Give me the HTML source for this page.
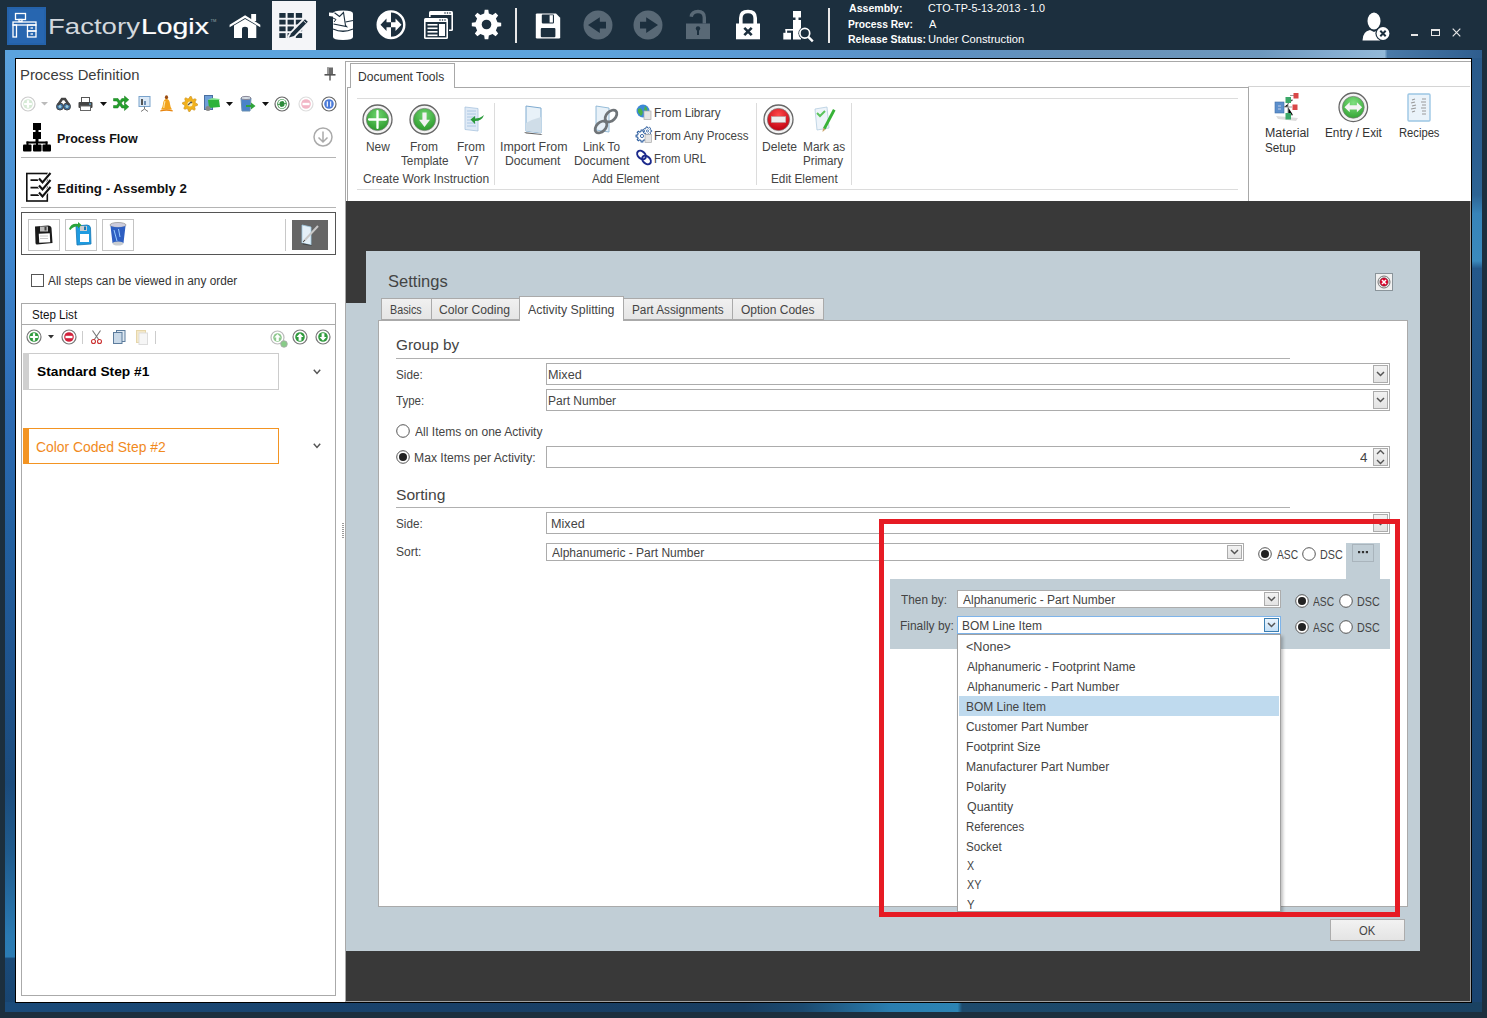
<!DOCTYPE html>
<html><head><meta charset="utf-8"><title>FactoryLogix</title>
<style>
html,body{margin:0;padding:0;}
body{width:1487px;height:1018px;position:relative;overflow:hidden;background:#1c2f3e;font-family:"Liberation Sans", sans-serif;}
svg{overflow:visible;}
</style></head><body>
<div style="position:absolute;left:7px;top:7px;width:39px;height:38px;background:#2462aa;"></div>
<div style="position:absolute;left:9px;top:9px;width:35px;height:34px;background:#2766b0;"></div>
<svg style="position:absolute;left:7px;top:7px;" width="39" height="38" viewBox="0 0 39 38"><g fill="none" stroke="#fff" stroke-width="1.3"><rect x="8.5" y="6.5" width="10" height="6"/><rect x="12" y="12.5" width="3" height="2"/><rect x="6" y="15" width="23" height="3"/><rect x="6" y="18" width="3.5" height="12"/><rect x="20.5" y="18" width="8.5" height="6"/><rect x="20.5" y="24" width="8.5" height="6"/><line x1="23.5" y1="21" x2="26" y2="21"/><line x1="23.5" y1="27" x2="26" y2="27"/></g></svg>
<div style="position:absolute;left:47.79px;top:16.08px;font-size:22px;line-height:22px;font-weight:400;color:#d2d8dd;white-space:nowrap;transform:scaleX(1.2531);transform-origin:0 0;">Factory</div>
<div style="position:absolute;left:141.43px;top:16.08px;font-size:22px;line-height:22px;font-weight:400;color:#ffffff;white-space:nowrap;transform:scaleX(1.2905);transform-origin:0 0;-webkit-text-stroke:0.2px #fff;">Logix</div>
<div style="position:absolute;left:210.50px;top:18.61px;font-size:4px;line-height:4px;font-weight:400;color:#9aa;white-space:nowrap;">TM</div>
<div style="position:absolute;left:272px;top:1px;width:44px;height:49px;background:#f4f5f8;"></div>
<svg style="position:absolute;left:225px;top:5px;" width="40" height="40" viewBox="0 0 40 40"><path d="M4.6 19.8 L20.1 10.2 L35.3 19.8 L35.3 22.2 L20.1 13 L4.6 22.2 Z" fill="#fff"/><rect x="26.2" y="9" width="4.9" height="7" fill="#fff"/><path d="M9 20.5 L20.1 14 L31.3 20.5 L31.3 33 L23 33 L23 24 Q23 21.7 20 21.7 Q17 21.7 17 24 L17 33 L9 33 Z" fill="#fff"/></svg>
<svg style="position:absolute;left:225px;top:5px;" width="95" height="40" viewBox="0 0 95 40"><rect x="54.30" y="8.00" width="6.3" height="4.8" fill="#1c2f3e"/><rect x="62.55" y="8.00" width="6.3" height="4.8" fill="#1c2f3e"/><rect x="70.80" y="8.00" width="6.3" height="4.8" fill="#1c2f3e"/><rect x="54.30" y="14.72" width="6.3" height="4.8" fill="#1c2f3e"/><rect x="62.55" y="14.72" width="6.3" height="4.8" fill="#1c2f3e"/><rect x="70.80" y="14.72" width="6.3" height="4.8" fill="#1c2f3e"/><rect x="54.30" y="21.44" width="6.3" height="4.8" fill="#1c2f3e"/><rect x="62.55" y="21.44" width="6.3" height="4.8" fill="#1c2f3e"/><rect x="70.80" y="21.44" width="6.3" height="4.8" fill="#1c2f3e"/><rect x="54.30" y="28.16" width="6.3" height="4.8" fill="#1c2f3e"/><rect x="62.55" y="28.16" width="6.3" height="4.8" fill="#1c2f3e"/><rect x="70.80" y="28.16" width="6.3" height="4.8" fill="#1c2f3e"/><path d="M63.5 32 L66 28 L80 13.5 L83.5 16.5 L69.5 31 L65 33.5 Z" fill="#f4f5f8" stroke="#f4f5f8" stroke-width="2.6" stroke-linejoin="round"/><path d="M64 32.5 L66.2 28.3 L80 14.2 L82.8 16.8 L69 31 Z" fill="#1c2f3e"/><path d="M78.5 15.8 L81.3 18.4" stroke="#f4f5f8" stroke-width="0.9"/></svg>
<svg style="position:absolute;left:320px;top:5px;" width="40" height="40" viewBox="0 0 40 40"><path d="M13 8.5 Q13 5.5 23 5.5 Q33 5.5 33 8.5 L33 32 Q33 35 23 35 Q13 35 13 32 Z" fill="#fff"/><path d="M13 24 Q23 28.5 33 24" stroke="#1c2f3e" stroke-width="1.3" fill="none"/><path d="M9 7.5 L15.5 8 L15.5 12 L9 11 Z" fill="#fff"/><path d="M14.5 7.8 L19.5 11.5 L23.5 7.5 L25.5 20.5 L26.5 21.5 L13.5 19" stroke="#1c2f3e" stroke-width="1.1" fill="none"/><path d="M25.5 17 L33 15.5" stroke="#1c2f3e" stroke-width="1.1" fill="none"/><path d="M13 13 L16 14.5 L14 17" stroke="#1c2f3e" stroke-width="1" fill="none"/></svg>
<svg style="position:absolute;left:376px;top:10px;" width="30" height="30" viewBox="0 0 30 30"><circle cx="15" cy="14.7" r="13.3" fill="none" stroke="#fff" stroke-width="2.4"/><path d="M15 1.5 A13.2 13.2 0 0 0 15 28 Z" fill="#fff"/><path d="M4.5 14.7 L10.5 8.5 L10.5 12.2 L15 12.2 L15 17.2 L10.5 17.2 L10.5 21 Z" fill="#1c2f3e"/><path d="M25.5 14.7 L19.5 8.5 L19.5 12.2 L15 12.2 L15 17.2 L19.5 17.2 L19.5 21 Z" fill="#fff"/></svg>
<svg style="position:absolute;left:423px;top:10px;" width="32" height="30" viewBox="0 0 32 30"><rect x="6" y="1" width="24" height="20" rx="1.5" fill="#fff"/><rect x="7.6" y="5" width="20.8" height="14.5" fill="#1c2f3e"/><rect x="0" y="7" width="26" height="23" rx="2" fill="#1c2f3e"/><rect x="1" y="8" width="24" height="21" rx="1.5" fill="#fff"/><rect x="2.6" y="12" width="20.8" height="15.4" fill="#1c2f3e"/><rect x="4.5" y="14" width="10" height="1.6" fill="#fff"/><rect x="4.5" y="17.5" width="10" height="1.6" fill="#fff"/><rect x="4.5" y="21" width="10" height="1.6" fill="#fff"/><rect x="4.5" y="24.5" width="10" height="1.6" fill="#fff"/><rect x="16" y="14" width="6" height="12" fill="#fff"/><circle cx="17" cy="10" r="0.8" fill="#1c2f3e"/><circle cx="19.5" cy="10" r="0.8" fill="#1c2f3e"/><circle cx="22" cy="10" r="0.8" fill="#1c2f3e"/><circle cx="22" cy="3" r="0.8" fill="#1c2f3e"/><circle cx="24.5" cy="3" r="0.8" fill="#1c2f3e"/><circle cx="27" cy="3" r="0.8" fill="#1c2f3e"/></svg>
<svg style="position:absolute;left:472px;top:10px;" width="29" height="30" viewBox="0 0 29 30"><polygon points="12.17,3.54 12.70,-0.19 16.30,-0.19 16.83,3.54 20.60,5.11 23.61,2.84 26.16,5.39 23.89,8.40 25.46,12.17 29.19,12.70 29.19,16.30 25.46,16.83 23.89,20.60 26.16,23.61 23.61,26.16 20.60,23.89 16.83,25.46 16.30,29.19 12.70,29.19 12.17,25.46 8.40,23.89 5.39,26.16 2.84,23.61 5.11,20.60 3.54,16.83 -0.19,16.30 -0.19,12.70 3.54,12.17 5.11,8.40 2.84,5.39 5.39,2.84 8.40,5.11" fill="#fff"/><circle cx="14.5" cy="14.5" r="4.8" fill="#1c2f3e"/></svg>
<div style="position:absolute;left:515px;top:8px;width:1.5px;height:35px;background:#e8e8e8;"></div>
<div style="position:absolute;left:828px;top:8px;width:1.5px;height:35px;background:#e8e8e8;"></div>
<svg style="position:absolute;left:535px;top:12.5px;" width="26" height="26" viewBox="0 0 26 26"><path d="M0.8 1.5 Q0.8 0.5 2 0.5 L21 0.5 L25.2 4.7 L25.2 24.2 Q25.2 25.5 24 25.5 L2 25.5 Q0.8 25.5 0.8 24.2 Z" fill="#fff"/><rect x="6.8" y="1.6" width="12.2" height="8.8" rx="0.8" fill="#1c2f3e"/><rect x="14.6" y="2.2" width="3.3" height="7.3" fill="#fff"/><rect x="5.8" y="15" width="14.6" height="9.3" rx="1" fill="#1c2f3e"/></svg>
<svg style="position:absolute;left:583px;top:10px;" width="30" height="30" viewBox="0 0 30 30"><circle cx="15" cy="15" r="14.5" fill="#596976"/><path d="M5 15 L16.8 7.3 L16.8 11.8 L23 11.8 L23 18.4 L16.8 18.4 L16.8 23 Z" fill="#1c2f3e"/></svg>
<svg style="position:absolute;left:633px;top:10px;" width="30" height="30" viewBox="0 0 30 30"><circle cx="15" cy="15" r="14.5" fill="#596976"/><path d="M25 15 L13.2 7.3 L13.2 11.8 L7 11.8 L7 18.4 L13.2 18.4 L13.2 23 Z" fill="#1c2f3e"/></svg>
<svg style="position:absolute;left:675px;top:5px;" width="145" height="40" viewBox="0 0 145 40"><path d="M29.3 18.5 L29.3 12.5 Q29.3 6.5 23 6.5 Q17 6.5 16.2 11.8" fill="none" stroke="#596976" stroke-width="3.4"/><rect x="11" y="18.5" width="24" height="15.6" fill="#596976"/><circle cx="23" cy="23.5" r="2.2" fill="#1c2f3e"/><rect x="22" y="24" width="2" height="6" fill="#1c2f3e"/><path d="M65.8 19 L65.8 13 Q65.8 6.5 73 6.5 Q80.2 6.5 80.2 13 L80.2 19" fill="none" stroke="#fff" stroke-width="3.6"/><rect x="61" y="18.5" width="24" height="15.8" fill="#fff"/><path d="M69.3 22.8 L76.7 30.2 M76.7 22.8 L69.3 30.2" stroke="#1c2f3e" stroke-width="2.6"/><rect x="118" y="6" width="8" height="6.5" fill="#fff"/><rect x="120.5" y="12" width="3" height="3" fill="#fff"/><rect x="118" y="15" width="8" height="19.5" fill="#fff"/><rect x="108.3" y="27.8" width="7.7" height="6.7" fill="#fff"/><rect x="110.5" y="24" width="10" height="1.6" fill="#fff"/><rect x="110.5" y="24" width="1.6" height="4" fill="#fff"/><circle cx="129.8" cy="28.3" r="6.4" fill="#1c2f3e"/><circle cx="129.8" cy="28.3" r="4.9" fill="#1c2f3e" stroke="#fff" stroke-width="1.7"/><path d="M133.3 31.8 L137.8 36.3" stroke="#fff" stroke-width="2.4"/></svg>
<div style="position:absolute;left:848.79px;top:3.29px;font-size:11px;line-height:11px;font-weight:700;color:#fff;white-space:nowrap;transform:scaleX(0.9606);transform-origin:0 0;">Assembly:</div>
<div style="position:absolute;left:928.46px;top:3.29px;font-size:11px;line-height:11px;font-weight:400;color:#fff;white-space:nowrap;transform:scaleX(0.9782);transform-origin:0 0;">CTO-TP-5-13-2013 - 1.0</div>
<div style="position:absolute;left:848.39px;top:18.79px;font-size:11px;line-height:11px;font-weight:700;color:#fff;white-space:nowrap;transform:scaleX(0.9312);transform-origin:0 0;">Process Rev:</div>
<div style="position:absolute;left:929.00px;top:18.79px;font-size:11px;line-height:11px;font-weight:400;color:#fff;white-space:nowrap;transform:scaleX(1.0041);transform-origin:0 0;">A</div>
<div style="position:absolute;left:848.37px;top:34.29px;font-size:11px;line-height:11px;font-weight:700;color:#fff;white-space:nowrap;transform:scaleX(0.9515);transform-origin:0 0;">Release Status:</div>
<div style="position:absolute;left:928.22px;top:34.29px;font-size:11px;line-height:11px;font-weight:400;color:#fff;white-space:nowrap;transform:scaleX(1.0142);transform-origin:0 0;">Under Construction</div>
<svg style="position:absolute;left:1362px;top:12px;" width="29" height="30" viewBox="0 0 29 30"><ellipse cx="12" cy="9" rx="6.5" ry="8.6" fill="#fff"/><path d="M0.5 28.5 Q0.5 19.5 8 18 L12 20 L16 18 Q20 19 22 22 L18 28.5 Z" fill="#fff"/><circle cx="21" cy="21.5" r="7.6" fill="#1c2f3e"/><circle cx="21" cy="21.5" r="6.4" fill="#fff"/><path d="M18.3 18.8 L23.7 24.2 M23.7 18.8 L18.3 24.2" stroke="#1c2f3e" stroke-width="2"/></svg>
<div style="position:absolute;left:1411px;top:34px;width:7px;height:2px;background:#e6e6e6;"></div>
<div style="position:absolute;left:1431px;top:29px;width:9px;height:7px;border:1.2px solid #e6e6e6;border-top-width:2px;box-sizing:border-box;"></div>
<svg style="position:absolute;left:1452px;top:28px;" width="9" height="9" viewBox="0 0 9 9"><path d="M0.7 0.7 L8.3 8.3 M8.3 0.7 L0.7 8.3" stroke="#e6e6e6" stroke-width="1.2"/></svg>
<div style="position:absolute;left:5px;top:50px;width:1477px;height:962px;background:linear-gradient(90deg,#5ba3de 0%,#5ea3dc 40%,#5a98d2 52%,#5b90c4 62%,#6892b8 74%,#6d98be 85%,#84acd0 90%,#93b9d8 93.4%,#4a7aa8 93.6%,#2e5d8e 100%);"></div>
<div style="position:absolute;left:5px;top:58px;width:10px;height:954px;background:linear-gradient(180deg,#5ba2de 0%,#4088cf 20%,#2d6cb5 36%,#2260a0 50%,#1f5590 62%,#1b4b7c 76%,#1f5a8c 83%,#2a7ab2 92%,#2b7cb4 94.2%,#1a4a78 94.4%,#184470 100%);"></div>
<div style="position:absolute;left:5px;top:1002px;width:1477px;height:10px;background:linear-gradient(90deg,#1a4b7a 0%,#194068 30%,#183d60 50%,#1b4a70 54%,#2a7eb0 60%,#2c84b4 64.5%,#1d4a6c 64.8%,#1a4262 100%);"></div>
<div style="position:absolute;left:1472px;top:58px;width:10px;height:944px;background:linear-gradient(180deg,#2a5a8a 0%,#2b5e90 10%,#2d6494 14.5%,#3784b9 16.5%,#3a8abd 21.5%,#24588a 22.3%,#1f5080 40%,#1c4a78 70%,#1a4470 100%);"></div>
<div style="position:absolute;left:15px;top:58px;width:1457px;height:945px;background:#000;"></div>
<div style="position:absolute;left:16px;top:59px;width:1455px;height:943px;background:#fff;"></div>
<div style="position:absolute;left:19.81px;top:67.63px;font-size:14.5px;line-height:14.5px;font-weight:400;color:#3c3c3c;white-space:nowrap;transform:scaleX(1.0218);transform-origin:0 0;">Process Definition</div>
<svg style="position:absolute;left:324px;top:67px;" width="12" height="14" viewBox="0 0 12 14"><rect x="3" y="0.5" width="6" height="7" fill="#6b6b6b"/><rect x="3" y="0.5" width="2" height="7" fill="#9a9a9a"/><rect x="0.5" y="7" width="11" height="1.6" fill="#555"/><rect x="5.3" y="8" width="1.4" height="5.5" fill="#555"/></svg>
<svg style="position:absolute;left:20px;top:96px;" width="16" height="16" viewBox="0 0 16 16"><circle cx="8" cy="8" r="7" fill="#fff" stroke="#ccc" stroke-width="1.2"/><circle cx="8" cy="8" r="4.8" fill="#d6ead6"/><path d="M4.1499999999999995 8 H11.850000000000001 M8 4.1499999999999995 V11.850000000000001" stroke="#fff" stroke-width="2.24"/></svg>
<svg style="position:absolute;left:41.0px;top:102.25px;" width="7" height="3.5" viewBox="0 0 7 3.5"><path d="M0 0 H7 L3.5 3.5 Z" fill="#bbb"/></svg>
<svg style="position:absolute;left:56px;top:97px;" width="15" height="14" viewBox="0 0 15 14"><circle cx="4" cy="9.5" r="3.5" fill="#3d6d9c" stroke="#444" stroke-width="1"/><circle cx="11" cy="9.5" r="3.5" fill="#3d6d9c" stroke="#444" stroke-width="1"/><path d="M2 8 L6 2 L9 2 L13 8" stroke="#444" stroke-width="2.5" fill="none"/><circle cx="4" cy="9.5" r="1.5" fill="#9cd"/><circle cx="11" cy="9.5" r="1.5" fill="#9cd"/></svg>
<svg style="position:absolute;left:78px;top:97px;" width="15" height="14" viewBox="0 0 15 14"><rect x="3.5" y="0.5" width="8" height="5" fill="#fff" stroke="#555"/><rect x="0.5" y="5" width="14" height="6" rx="1" fill="#444"/><rect x="2.5" y="9" width="10" height="4.5" fill="#fff" stroke="#666"/><rect x="11" y="6.5" width="2" height="1" fill="#6cf"/></svg>
<svg style="position:absolute;left:99.5px;top:102.0px;" width="7" height="4" viewBox="0 0 7 4"><path d="M0 0 H7 L3.5 4 Z" fill="#111"/></svg>
<svg style="position:absolute;left:113px;top:96px;" width="16" height="15" viewBox="0 0 16 15"><path d="M0.5 2.5 H5 L10 9.5 H11.5 V7 L15.8 10.8 L11.5 14.5 V12 H8.8 L3.8 5 H0.5 Z" fill="#22a02a" stroke="#187a1e" stroke-width="0.5"/><path d="M0.5 9.5 H3.5 L5.2 7.3 L6.8 9.2 L4.8 12 H0.5 Z M8.8 2.5 H11.5 V0 L15.8 3.8 L11.5 7.5 V5 H10 L8.6 6.8 L7 4.9 Z" fill="#22a02a" stroke="#187a1e" stroke-width="0.5"/></svg>
<svg style="position:absolute;left:138px;top:96px;" width="13" height="16" viewBox="0 0 13 16"><rect x="1" y="0.5" width="11" height="10" fill="#dbe9f7" stroke="#7aa3cc"/><rect x="3" y="3" width="2" height="6" fill="#555"/><rect x="6" y="5" width="2" height="4" fill="#6d8fb5"/><path d="M6.5 10.5 V13 M6.5 13 L3 15.5 M6.5 13 L10 15.5" stroke="#777" stroke-width="1"/></svg>
<svg style="position:absolute;left:159px;top:95px;" width="15" height="17" viewBox="0 0 15 17"><ellipse cx="7.5" cy="2.3" rx="1.6" ry="2" fill="#9b4d12"/><path d="M2 14.5 Q3.5 13 4 9 Q4.5 4 7.5 4 Q10.5 4 11 9 Q11.5 13 13 14.5 Z" fill="#f2a31e"/><path d="M1 15.5 Q7.5 13 14 15.5 L13.5 16.5 Q7.5 15 1.5 16.5 Z" fill="#e8850f"/><path d="M6 6 Q5 10 4.8 13" stroke="#fde7a8" stroke-width="1.1" fill="none"/></svg>
<svg style="position:absolute;left:182px;top:96px;" width="16" height="16" viewBox="0 0 16 16"><polygon points="15.50,8.00 15.36,9.46 13.08,10.10 12.57,11.06 13.30,13.30 12.17,14.24 10.10,13.08 9.07,13.39 8.00,15.50 6.54,15.36 5.90,13.08 4.94,12.57 2.70,13.30 1.76,12.17 2.92,10.10 2.61,9.07 0.50,8.00 0.64,6.54 2.92,5.90 3.43,4.94 2.70,2.70 3.83,1.76 5.90,2.92 6.93,2.61 8.00,0.50 9.46,0.64 10.10,2.92 11.06,3.43 13.30,2.70 14.24,3.83 13.08,5.90 13.39,6.93" fill="#f2b21c" stroke="#c98a10" stroke-width="0.6"/><circle cx="8" cy="8" r="2.5" fill="#fff3c6"/><path d="M6 9 L9 6 L10 7" stroke="#555" stroke-width="1.2" fill="none"/></svg>
<svg style="position:absolute;left:204px;top:95px;" width="17" height="17" viewBox="0 0 17 17"><rect x="0.5" y="0.5" width="8" height="14" fill="#6f9fd8" stroke="#4a6fa0"/><path d="M4 5 L15 5 L16 12 L5 13 Z" fill="#2db33a"/><path d="M4 5 L8 3 L16 4 L15 5 Z" fill="#7fe08a"/><circle cx="4" cy="13.5" r="2.5" fill="#888"/></svg>
<svg style="position:absolute;left:226.1px;top:102.0px;" width="7" height="4" viewBox="0 0 7 4"><path d="M0 0 H7 L3.5 4 Z" fill="#111"/></svg>
<svg style="position:absolute;left:240px;top:96px;" width="16" height="16" viewBox="0 0 16 16"><path d="M1 2 H11 L10 15 H2 Z" fill="#4a83c9" stroke="#6b8fb0"/><ellipse cx="6" cy="2" rx="5" ry="1.6" fill="#d5dde5" stroke="#889"/><path d="M6 9 H11 V6.5 L15.5 10 L11 13.5 V11 H6 Z" fill="#2fa33a"/></svg>
<svg style="position:absolute;left:261.6px;top:102.0px;" width="7" height="4" viewBox="0 0 7 4"><path d="M0 0 H7 L3.5 4 Z" fill="#111"/></svg>
<svg style="position:absolute;left:274.4px;top:96px;" width="16" height="16" viewBox="0 0 16 16"><circle cx="8" cy="8" r="7" fill="#fff" stroke="#666" stroke-width="1.2"/><circle cx="8" cy="8" r="4.8" fill="#2c8a3a"/><path d="M4.85 8 A3.15 3.15 0 0 1 11.15 7.3" stroke="#fff" stroke-width="1.3" fill="none"/><path d="M11.15 8 A3.15 3.15 0 0 1 4.85 8.7" stroke="#fff" stroke-width="1.3" fill="none"/></svg>
<svg style="position:absolute;left:297.7px;top:96px;" width="16" height="16" viewBox="0 0 16 16"><circle cx="8" cy="8" r="7" fill="#fff" stroke="#ddd" stroke-width="1.2"/><circle cx="8" cy="8" r="4.8" fill="#f2b6c6"/><rect x="4.5" y="6.81" width="7" height="2.3800000000000003" fill="#fff"/></svg>
<svg style="position:absolute;left:320.6px;top:96px;" width="16" height="16" viewBox="0 0 16 16"><circle cx="8" cy="8" r="7" fill="#fff" stroke="#666" stroke-width="1.2"/><circle cx="8" cy="8" r="4.8" fill="#4a7ad8"/><rect x="5.76" y="5.34" width="1.12" height="5.32" fill="#fff"/><rect x="9.120000000000001" y="5.34" width="1.12" height="5.32" fill="#fff"/></svg>
<svg style="position:absolute;left:23px;top:123px;" width="29" height="29" viewBox="0 0 29 29"><rect x="10" y="0" width="8" height="7" fill="#000"/><rect x="10" y="9" width="8" height="7" fill="#000"/><rect x="12.5" y="6" width="3" height="4" fill="#000"/><rect x="12.5" y="15" width="3" height="5" fill="#000"/><rect x="3.5" y="18.5" width="21" height="2" fill="#000"/><rect x="3.5" y="18.5" width="2" height="4" fill="#000"/><rect x="22.5" y="18.5" width="2" height="4" fill="#000"/><rect x="13" y="18.5" width="2" height="4" fill="#000"/><rect x="0" y="21.5" width="8.5" height="7" rx="1" fill="#000"/><rect x="10" y="21.5" width="8.5" height="7" rx="1" fill="#000"/><rect x="19.5" y="21.5" width="8.5" height="7" rx="1" fill="#000"/></svg>
<div style="position:absolute;left:57.05px;top:132.20px;font-size:13px;line-height:13px;font-weight:700;color:#111;white-space:nowrap;transform:scaleX(0.9630);transform-origin:0 0;">Process Flow</div>
<svg style="position:absolute;left:313px;top:127px;" width="20" height="20" viewBox="0 0 20 20"><circle cx="10" cy="10" r="9" fill="none" stroke="#aaa" stroke-width="1.5"/><path d="M10 4.5 V14.5 M5.5 10.5 L10 15 L14.5 10.5" stroke="#aaa" stroke-width="1.5" fill="none"/></svg>
<div style="position:absolute;left:21px;top:157px;width:315px;height:1px;background:#b4b4b4;"></div>
<svg style="position:absolute;left:26px;top:172px;" width="27" height="30" viewBox="0 0 27 30"><rect x="0.8" y="1.5" width="20.5" height="27.5" fill="#fff" stroke="#111" stroke-width="1.6"/><path d="M4.5 8.2 H13.5 M4.5 15.6 H13.5 M4.5 23.2 H13.5" stroke="#111" stroke-width="1.8"/><path d="M13 6.5 L16.5 10.5 L24.5 1 M13 13.5 L16.5 17.5 L24.5 8 M13 20.5 L16.5 24.5 L24.5 15" stroke="#fff" stroke-width="4" fill="none"/><path d="M13 6.5 L16.5 10.5 L24.5 1 M13 13.5 L16.5 17.5 L24.5 8 M13 20.5 L16.5 24.5 L24.5 15" stroke="#111" stroke-width="2.1" fill="none"/></svg>
<div style="position:absolute;left:57.00px;top:182.00px;font-size:13px;line-height:13px;font-weight:700;color:#111;white-space:nowrap;transform:scaleX(1.0206);transform-origin:0 0;">Editing - Assembly 2</div>
<div style="position:absolute;left:21px;top:207px;width:315px;height:1px;background:#b4b4b4;"></div>
<div style="position:absolute;left:21px;top:212px;width:315px;height:43px;border:1px solid #555;box-sizing:border-box;"></div>
<div style="position:absolute;left:28px;top:219px;width:32px;height:32px;border:1px solid #c4c4c4;box-sizing:border-box;background:#fff;"></div>
<div style="position:absolute;left:65px;top:219px;width:32px;height:32px;border:1px solid #c4c4c4;box-sizing:border-box;background:#fff;"></div>
<div style="position:absolute;left:102px;top:219px;width:32px;height:32px;border:1px solid #c4c4c4;box-sizing:border-box;background:#fff;"></div>
<svg style="position:absolute;left:34px;top:225px;" width="20" height="20" viewBox="0 0 20 20"><path d="M1 1.5 L14 0.5 Q17 0.5 17.5 3 L18.5 18 L3 19.5 Q1.5 19.5 1.5 18 Z" fill="#1a1a1a"/><rect x="5" y="8.5" width="11" height="9" fill="#fff" transform="rotate(-3 10 13)"/><rect x="6" y="1.5" width="8" height="5" fill="#bbb"/><rect x="10.5" y="2" width="2" height="3.5" fill="#444"/><path d="M6 11 H14 M6 13.5 H14" stroke="#bbb" stroke-width="0.8"/></svg>
<svg style="position:absolute;left:68px;top:222px;" width="26" height="25" viewBox="0 0 26 25"><path d="M8 4 L19 3 Q22 3 22.5 6 L23 22 L9 23 Z" fill="#1f9be0" stroke="#1577b5" stroke-width="0.8"/><rect x="12" y="12" width="9" height="8" fill="#fff"/><rect x="12" y="4" width="7" height="5" fill="#ccc"/><rect x="16" y="4.5" width="2" height="3.5" fill="#1577b5"/><path d="M1 7 Q3 1 10 2 L10 0 L13.5 3 L10 6.5 L10 4.5 Q5 4 2.5 8 Z" fill="#2aa33a"/></svg>
<svg style="position:absolute;left:109px;top:222px;" width="18" height="25" viewBox="0 0 18 25"><ellipse cx="9" cy="3" rx="8" ry="2.5" fill="#ccd" stroke="#999" stroke-width="0.8"/><path d="M1.5 4 L3.5 21 Q9 23 14.5 21 L16.5 4 Q9 6.5 1.5 4 Z" fill="#2e5fc2"/><path d="M5 8 L8 19 M9.5 7 L11 15" stroke="#9cf" stroke-width="1" /><ellipse cx="9" cy="21.5" rx="5.5" ry="2" fill="#c8ccd0"/></svg>
<div style="position:absolute;left:285px;top:219px;width:1px;height:32px;background:#c8c8c8;"></div>
<div style="position:absolute;left:292px;top:220px;width:36px;height:30px;background:#666;"></div>
<svg style="position:absolute;left:299px;top:223px;" width="22" height="25" viewBox="0 0 22 25"><path d="M3 2 L12 4 L12 22 L3 20 Z" fill="#e4f0f8" stroke="#9ec8e0" stroke-width="0.8"/><path d="M3 20 L12 22 L13 23 L4 21.5 Z" fill="#444"/><path d="M4 19 L19 3" stroke="#c8c8c8" stroke-width="2"/><path d="M4 19 L6 17" stroke="#555" stroke-width="1"/></svg>
<div style="position:absolute;left:31px;top:274px;width:13px;height:13px;border:1px solid #555;box-sizing:border-box;background:#fff;"></div>
<div style="position:absolute;left:48.40px;top:275.04px;font-size:12px;line-height:12px;font-weight:400;color:#333;white-space:nowrap;transform:scaleX(0.9850);transform-origin:0 0;">All steps can be viewed in any order</div>
<div style="position:absolute;left:21px;top:303px;width:315px;height:693px;border:1px solid #aaa;box-sizing:border-box;"></div>
<div style="position:absolute;left:32.42px;top:308.54px;font-size:12px;line-height:12px;font-weight:400;color:#111;white-space:nowrap;transform:scaleX(0.9661);transform-origin:0 0;">Step List</div>
<div style="position:absolute;left:22px;top:324px;width:313px;height:1px;background:#aaa;"></div>
<svg style="position:absolute;left:26px;top:329px;" width="16" height="16" viewBox="0 0 16 16"><circle cx="8" cy="8" r="7" fill="#fff" stroke="#777" stroke-width="1.2"/><circle cx="8" cy="8" r="4.8" fill="#2e9a3c"/><path d="M4.1499999999999995 8 H11.850000000000001 M8 4.1499999999999995 V11.850000000000001" stroke="#fff" stroke-width="2.24"/></svg>
<svg style="position:absolute;left:48.0px;top:334.75px;" width="6" height="3.5" viewBox="0 0 6 3.5"><path d="M0 0 H6 L3.0 3.5 Z" fill="#333"/></svg>
<svg style="position:absolute;left:61px;top:329px;" width="16" height="16" viewBox="0 0 16 16"><circle cx="8" cy="8" r="7" fill="#fff" stroke="#777" stroke-width="1.2"/><circle cx="8" cy="8" r="4.8" fill="#d1213a"/><rect x="4.5" y="6.81" width="7" height="2.3800000000000003" fill="#fff"/></svg>
<div style="position:absolute;left:82px;top:331px;width:1px;height:13px;background:#ccc;"></div>
<svg style="position:absolute;left:91px;top:330px;" width="11" height="14" viewBox="0 0 11 14"><path d="M1.5 0.5 L8 10 M9.5 0.5 L3 10" stroke="#777" stroke-width="1.1"/><circle cx="2.5" cy="11.5" r="2" fill="none" stroke="#c33" stroke-width="1.1"/><circle cx="8.5" cy="11.5" r="2" fill="none" stroke="#c33" stroke-width="1.1"/></svg>
<svg style="position:absolute;left:113px;top:330px;" width="13" height="14" viewBox="0 0 13 14"><rect x="3.5" y="0.5" width="8.5" height="11" fill="#dfe9f2" stroke="#5d7d9d"/><rect x="0.5" y="2.5" width="8.5" height="11" fill="#c9d9e8" stroke="#5d7d9d"/></svg>
<svg style="position:absolute;left:136px;top:329px;" width="12" height="16" viewBox="0 0 12 16"><rect x="0.5" y="1.5" width="9" height="12" fill="#f4e8c8" stroke="#e6d6aa"/><rect x="3" y="4" width="8.5" height="11.5" fill="#f6f6f6" stroke="#ddd"/></svg>
<div style="position:absolute;left:155px;top:331px;width:1px;height:13px;background:#ccc;"></div>
<svg style="position:absolute;left:269.5px;top:329.5px;" width="15.0" height="15.0" viewBox="0 0 15.0 15.0"><circle cx="7.5" cy="7.5" r="6.5" fill="#fff" stroke="#bbb" stroke-width="1.2"/><circle cx="7.5" cy="7.5" r="4.3" fill="#8ec88e"/><path d="M7.5 3.925 L10.75 7.5 H8.8 V11.075 H6.2 V7.5 H4.25 Z" fill="#fff"/></svg>
<svg style="position:absolute;left:280px;top:340px;" width="8" height="8" viewBox="0 0 8 8"><circle cx="4" cy="4" r="3.3" fill="#8c8" stroke="#aaa" stroke-width="0.8"/></svg>
<svg style="position:absolute;left:292px;top:329px;" width="16" height="16" viewBox="0 0 16 16"><circle cx="8" cy="8" r="7" fill="#fff" stroke="#777" stroke-width="1.2"/><circle cx="8" cy="8" r="4.8" fill="#2e9a3c"/><path d="M8 4.1499999999999995 L11.5 8 H9.4 V11.850000000000001 H6.6 V8 H4.5 Z" fill="#fff"/></svg>
<svg style="position:absolute;left:315px;top:329px;" width="16" height="16" viewBox="0 0 16 16"><circle cx="8" cy="8" r="7" fill="#fff" stroke="#777" stroke-width="1.2"/><circle cx="8" cy="8" r="4.8" fill="#2e9a3c"/><path d="M8 11.850000000000001 L11.5 8 H9.4 V4.1499999999999995 H6.6 V8 H4.5 Z" fill="#fff"/></svg>
<div style="position:absolute;left:23px;top:353px;width:256px;height:37px;border:1px solid #ccc;box-sizing:border-box;background:#fff;"></div>
<div style="position:absolute;left:23px;top:353px;width:6px;height:37px;background:#d0d0d0;"></div>
<div style="position:absolute;left:36.59px;top:365.37px;font-size:13.5px;line-height:13.5px;font-weight:700;color:#000;white-space:nowrap;transform:scaleX(1.0184);transform-origin:0 0;">Standard Step #1</div>
<svg style="position:absolute;left:312.5px;top:369px;" width="8" height="6" viewBox="0 0 8 6"><path d="M0.8 0.8 L4 4.4 L7.2 0.8" stroke="#555" stroke-width="1.5" fill="none"/></svg>
<div style="position:absolute;left:23px;top:428px;width:256px;height:36px;border:1px solid #f39422;box-sizing:border-box;background:#fff;"></div>
<div style="position:absolute;left:23px;top:428px;width:6px;height:36px;background:#f39422;"></div>
<div style="position:absolute;left:36.11px;top:439.85px;font-size:14px;line-height:14px;font-weight:400;color:#f18a1d;white-space:nowrap;transform:scaleX(0.9918);transform-origin:0 0;">Color Coded Step #2</div>
<svg style="position:absolute;left:312.5px;top:443px;" width="8" height="6" viewBox="0 0 8 6"><path d="M0.8 0.8 L4 4.4 L7.2 0.8" stroke="#555" stroke-width="1.5" fill="none"/></svg>
<div style="position:absolute;left:345px;top:61px;width:1px;height:941px;background:#a8a8a8;"></div>
<div style="position:absolute;left:345px;top:61px;width:1126px;height:1px;background:#a8a8a8;"></div>
<div style="position:absolute;left:350px;top:63px;width:105px;height:25px;border:1px solid #a8a8a8;border-bottom:none;box-sizing:border-box;background:#fff;"></div>
<div style="position:absolute;left:358.44px;top:70.74px;font-size:12px;line-height:12px;font-weight:400;color:#333;white-space:nowrap;transform:scaleX(1.0050);transform-origin:0 0;">Document Tools</div>
<div style="position:absolute;left:347px;top:87px;width:3px;height:1px;background:#a8a8a8;"></div>
<div style="position:absolute;left:455px;top:87px;width:794px;height:1px;background:#a8a8a8;"></div>
<div style="position:absolute;left:347px;top:87px;width:1px;height:114px;background:#a8a8a8;"></div>
<div style="position:absolute;left:1248px;top:87px;width:1px;height:114px;background:#a8a8a8;"></div>
<div style="position:absolute;left:1248px;top:86px;width:222px;height:1px;background:#d4d4d4;"></div>
<div style="position:absolute;left:357px;top:98px;width:881px;height:1px;background:#dcdcdc;"></div>
<div style="position:absolute;left:357px;top:189px;width:881px;height:1px;background:#dcdcdc;"></div>
<div style="position:absolute;left:494px;top:103px;width:1px;height:82px;background:#dcdcdc;"></div>
<div style="position:absolute;left:756px;top:103px;width:1px;height:82px;background:#dcdcdc;"></div>
<div style="position:absolute;left:851px;top:103px;width:1px;height:82px;background:#dcdcdc;"></div>
<svg style="position:absolute;left:361.9px;top:103.8px;" width="31.0" height="31.0" viewBox="0 0 31.0 31.0"><defs><radialGradient id="g377" cx="50%" cy="30%" r="70%"><stop offset="0" stop-color="#6fd46f"/><stop offset="1" stop-color="#2c9a2c"/></radialGradient></defs><circle cx="15.5" cy="15.5" r="14.5" fill="#f4f4f4" stroke="#666" stroke-width="1.3"/><circle cx="15.5" cy="15.5" r="11.1" fill="url(#g377)" stroke="#777" stroke-width="0.7"/><path d="M7.09 15.5 H23.91 M15.5 7.09 V23.91" stroke="#fff" stroke-width="2.3" stroke-linecap="round"/></svg>
<svg style="position:absolute;left:408.9px;top:103.8px;" width="31.0" height="31.0" viewBox="0 0 31.0 31.0"><defs><radialGradient id="g424" cx="50%" cy="30%" r="70%"><stop offset="0" stop-color="#6fd46f"/><stop offset="1" stop-color="#2c9a2c"/></radialGradient></defs><circle cx="15.5" cy="15.5" r="14.5" fill="#f4f4f4" stroke="#666" stroke-width="1.3"/><circle cx="15.5" cy="15.5" r="11.1" fill="url(#g424)" stroke="#777" stroke-width="0.7"/><path d="M15.5 23.1 L21.0 15.7 H17.6 V8.5 H13.4 V15.7 H10.0 Z" fill="#f2f2f2"/></svg>
<svg style="position:absolute;left:762.9px;top:103.8px;" width="31.0" height="31.0" viewBox="0 0 31.0 31.0"><defs><radialGradient id="g778" cx="50%" cy="30%" r="70%"><stop offset="0" stop-color="#ff4a4a"/><stop offset="1" stop-color="#c00010"/></radialGradient></defs><circle cx="15.5" cy="15.5" r="14.5" fill="#f4f4f4" stroke="#666" stroke-width="1.3"/><circle cx="15.5" cy="15.5" r="11.1" fill="url(#g778)" stroke="#777" stroke-width="0.7"/><rect x="8.25" y="12.6" width="14.5" height="5.800000000000001" fill="#eee" stroke="#aaa" stroke-width="0.5"/></svg>
<svg style="position:absolute;left:1338.0px;top:92.10000000000001px;" width="30.6" height="30.6" viewBox="0 0 30.6 30.6"><defs><radialGradient id="g1353" cx="50%" cy="30%" r="70%"><stop offset="0" stop-color="#7fe07f"/><stop offset="1" stop-color="#35a535"/></radialGradient></defs><circle cx="15.3" cy="15.3" r="14.3" fill="#f4f4f4" stroke="#666" stroke-width="1.3"/><circle cx="15.3" cy="15.3" r="10.9" fill="url(#g1353)" stroke="#777" stroke-width="0.7"/><path d="M6.434000000000001 15.3 L11.725000000000001 10.295000000000002 V13.155000000000001 H18.875 V10.295000000000002 L24.166 15.3 L18.875 20.305 V17.445 H11.725000000000001 V20.305 Z" fill="#f4f4f4"/></svg>
<svg style="position:absolute;left:463px;top:106px;" width="22" height="27" viewBox="0 0 22 27"><path d="M2 1 L15 2.5 L15 25 L2 23.5 Z" fill="#dfeaf6" stroke="#a9c4de" stroke-width="0.8"/><path d="M4 5 H13 M4 8 H13 M4 11 H13 M4 14 H13 M4 17 H13 M4 20 H13" stroke="#9fbfe0" stroke-width="0.8"/><path d="M21 9 Q19 15 12 15 L12 18 L7.5 13.5 L12 10 L12 12.5 Q17 12.5 21 9 Z" fill="#2a9a3a"/></svg>
<div style="position:absolute;left:365.75px;top:140.64px;font-size:12px;line-height:12px;font-weight:400;color:#444;white-space:nowrap;transform:scaleX(0.9931);transform-origin:0 0;">New</div>
<div style="position:absolute;left:410.04px;top:140.64px;font-size:12px;line-height:12px;font-weight:400;color:#444;white-space:nowrap;transform:scaleX(0.9970);transform-origin:0 0;">From</div>
<div style="position:absolute;left:400.77px;top:155.44px;font-size:12px;line-height:12px;font-weight:400;color:#444;white-space:nowrap;transform:scaleX(0.9774);transform-origin:0 0;">Template</div>
<div style="position:absolute;left:457.04px;top:140.64px;font-size:12px;line-height:12px;font-weight:400;color:#444;white-space:nowrap;transform:scaleX(0.9970);transform-origin:0 0;">From</div>
<div style="position:absolute;left:465.00px;top:155.44px;font-size:12px;line-height:12px;font-weight:400;color:#444;white-space:nowrap;transform:scaleX(0.9393);transform-origin:0 0;">V7</div>
<div style="position:absolute;left:362.70px;top:173.34px;font-size:12px;line-height:12px;font-weight:400;color:#444;white-space:nowrap;transform:scaleX(1.0021);transform-origin:0 0;">Create Work Instruction</div>
<svg style="position:absolute;left:523px;top:105px;" width="22" height="31" viewBox="0 0 22 31"><path d="M3 1 L18 3 L18 28 L3 26 Z" fill="#e8f1f8" stroke="#7fabd0" stroke-width="1"/><path d="M3 18 Q10 14 18 12 L18 28 L3 26 Z" fill="#cfdde8"/><path d="M1 27 L18 29 L19.5 30 L3 28.5 Z" fill="#666"/></svg>
<div style="position:absolute;left:499.58px;top:140.84px;font-size:12px;line-height:12px;font-weight:400;color:#444;white-space:nowrap;transform:scaleX(1.0334);transform-origin:0 0;">Import From</div>
<div style="position:absolute;left:505.33px;top:155.24px;font-size:12px;line-height:12px;font-weight:400;color:#444;white-space:nowrap;transform:scaleX(1.0142);transform-origin:0 0;">Document</div>
<svg style="position:absolute;left:592px;top:105px;" width="28" height="32" viewBox="0 0 28 32"><path d="M4 1 L17 3 L17 27 L4 25 Z" fill="#e8f1f8" stroke="#8ab4d4" stroke-width="0.9"/><ellipse cx="19" cy="11" rx="4.5" ry="7" transform="rotate(45 19 11)" fill="none" stroke="#6f7478" stroke-width="2.8"/><ellipse cx="9" cy="22" rx="4.5" ry="7" transform="rotate(45 9 22)" fill="none" stroke="#6f7478" stroke-width="2.8"/></svg>
<div style="position:absolute;left:582.56px;top:140.84px;font-size:12px;line-height:12px;font-weight:400;color:#444;white-space:nowrap;transform:scaleX(0.9763);transform-origin:0 0;">Link To</div>
<div style="position:absolute;left:573.73px;top:155.24px;font-size:12px;line-height:12px;font-weight:400;color:#444;white-space:nowrap;transform:scaleX(1.0142);transform-origin:0 0;">Document</div>
<svg style="position:absolute;left:636px;top:104px;" width="16" height="16" viewBox="0 0 16 16"><circle cx="7" cy="7" r="6.5" fill="#3d88d8"/><path d="M2 5 Q5 3 6 6 Q8 9 5 12 Q3 10 2 8 Z M9 2 Q12 4 11 7 L8 6 Z" fill="#4ab04a"/><rect x="8" y="7" width="7" height="8.5" fill="#e4e4e4" stroke="#aaa" stroke-width="0.7"/></svg>
<svg style="position:absolute;left:636px;top:126px;" width="16" height="17" viewBox="0 0 16 17"><polygon points="10.37,8.91 11.94,9.16 11.94,10.84 10.37,11.09 9.86,12.32 10.79,13.61 9.61,14.79 8.32,13.86 7.09,14.37 6.84,15.94 5.16,15.94 4.91,14.37 3.68,13.86 2.39,14.79 1.21,13.61 2.14,12.32 1.63,11.09 0.06,10.84 0.06,9.16 1.63,8.91 2.14,7.68 1.21,6.39 2.39,5.21 3.68,6.14 4.91,5.63 5.16,4.06 6.84,4.06 7.09,5.63 8.32,6.14 9.61,5.21 10.79,6.39 9.86,7.68" fill="#fff" stroke="#2f5f9f" stroke-width="1.1"/><circle cx="6" cy="10" r="1.6" fill="#fff" stroke="#2f5f9f" stroke-width="0.9"/><polygon points="14.48,4.15 15.65,4.34 15.65,5.66 14.48,5.85 14.03,6.80 14.60,7.83 13.57,8.65 12.69,7.86 11.67,8.10 11.22,9.19 9.94,8.90 10.00,7.72 9.19,7.06 8.05,7.39 7.48,6.21 8.44,5.52 8.44,4.48 7.48,3.79 8.05,2.61 9.19,2.94 10.00,2.28 9.94,1.10 11.22,0.81 11.67,1.90 12.69,2.14 13.57,1.35 14.60,2.17 14.03,3.20" fill="#fff" stroke="#2f5f9f" stroke-width="1"/><circle cx="11.5" cy="5" r="1.1" fill="#fff" stroke="#2f5f9f" stroke-width="0.8"/><rect x="9" y="8.5" width="6.5" height="8" fill="#e4e4e4" stroke="#aaa" stroke-width="0.7"/></svg>
<svg style="position:absolute;left:636px;top:150px;" width="16" height="15" viewBox="0 0 16 15"><ellipse cx="5.5" cy="5" rx="3.5" ry="5" transform="rotate(-45 5.5 5)" fill="none" stroke="#1c2a8c" stroke-width="2"/><ellipse cx="10.5" cy="10" rx="3.5" ry="5" transform="rotate(-45 10.5 10)" fill="none" stroke="#1c2a8c" stroke-width="2"/></svg>
<div style="position:absolute;left:654.36px;top:106.64px;font-size:12px;line-height:12px;font-weight:400;color:#444;white-space:nowrap;transform:scaleX(0.9794);transform-origin:0 0;">From Library</div>
<div style="position:absolute;left:654.37px;top:129.84px;font-size:12px;line-height:12px;font-weight:400;color:#444;white-space:nowrap;transform:scaleX(0.9646);transform-origin:0 0;">From Any Process</div>
<div style="position:absolute;left:654.40px;top:152.64px;font-size:12px;line-height:12px;font-weight:400;color:#444;white-space:nowrap;transform:scaleX(0.9405);transform-origin:0 0;">From URL</div>
<div style="position:absolute;left:592.30px;top:173.24px;font-size:12px;line-height:12px;font-weight:400;color:#444;white-space:nowrap;transform:scaleX(0.9790);transform-origin:0 0;">Add Element</div>
<svg style="position:absolute;left:812px;top:106px;" width="24" height="28" viewBox="0 0 24 28"><path d="M3 3 L15 1 L17 22 L5 24 Z" fill="#eef4fa" stroke="#b4cde0" stroke-width="0.8"/><path d="M5 7 L8 10 L13 5" stroke="#5cc45c" stroke-width="2" fill="none"/><path d="M11 22 L21 3 L23.5 4.5 L13.5 23.5 Z" fill="#38b338"/><path d="M11 22 L13.5 23.5 L10.5 26 Z" fill="#c9a36a"/></svg>
<div style="position:absolute;left:761.73px;top:140.64px;font-size:12px;line-height:12px;font-weight:400;color:#444;white-space:nowrap;transform:scaleX(1.0115);transform-origin:0 0;">Delete</div>
<div style="position:absolute;left:803.05px;top:140.64px;font-size:12px;line-height:12px;font-weight:400;color:#444;white-space:nowrap;transform:scaleX(0.9903);transform-origin:0 0;">Mark as</div>
<div style="position:absolute;left:803.47px;top:154.84px;font-size:12px;line-height:12px;font-weight:400;color:#444;white-space:nowrap;transform:scaleX(0.9697);transform-origin:0 0;">Primary</div>
<div style="position:absolute;left:770.56px;top:173.24px;font-size:12px;line-height:12px;font-weight:400;color:#444;white-space:nowrap;transform:scaleX(0.9797);transform-origin:0 0;">Edit Element</div>
<svg style="position:absolute;left:1272px;top:92px;" width="30" height="31" viewBox="0 0 30 31"><path d="M4 24 L26 26 L24 29 L6 27 Z" fill="#ddd"/><rect x="3" y="10" width="9" height="11" fill="#5c8fcc" stroke="#3f6ea8" stroke-width="0.6"/><path d="M6 14 H9 M6 17 H9" stroke="#dde" stroke-width="0.8"/><path d="M12 15 H16 V8 H21 M16 15 V23 H21 M18 3.5 H22 M16 15 H20" stroke="#9a9a9a" stroke-width="1"/><rect x="13.5" y="5" width="5.5" height="6" fill="#3ba868"/><rect x="21.5" y="1" width="5" height="5.5" fill="#d94848"/><rect x="20.5" y="12.5" width="5" height="5.5" fill="#d94848"/><rect x="13.5" y="21" width="5.5" height="6.5" fill="#3ba868"/></svg>
<div style="position:absolute;left:1264.51px;top:126.64px;font-size:12px;line-height:12px;font-weight:400;color:#333;white-space:nowrap;transform:scaleX(1.0313);transform-origin:0 0;">Material</div>
<div style="position:absolute;left:1264.92px;top:142.14px;font-size:12px;line-height:12px;font-weight:400;color:#333;white-space:nowrap;transform:scaleX(0.9750);transform-origin:0 0;">Setup</div>
<div style="position:absolute;left:1324.86px;top:126.64px;font-size:12px;line-height:12px;font-weight:400;color:#333;white-space:nowrap;transform:scaleX(0.9807);transform-origin:0 0;">Entry / Exit</div>
<svg style="position:absolute;left:1407px;top:93px;" width="26" height="30" viewBox="0 0 26 30"><rect x="1" y="1" width="22" height="27" rx="1" fill="#eaf3fa" stroke="#9cc6e4" stroke-width="1.4"/><path d="M5 7 L8 6 M4 10 L8 9 M5 13 L9 12 M4 16 L9 15 M5 19 L8 18 M15 6 H19 M14 9 H19 M15 12 H19 M14 15 H19 M15 18 H19 M15 21 H19" stroke="#999" stroke-width="1.2"/></svg>
<div style="position:absolute;left:1398.70px;top:126.64px;font-size:12px;line-height:12px;font-weight:400;color:#333;white-space:nowrap;transform:scaleX(0.9333);transform-origin:0 0;">Recipes</div>
<div style="position:absolute;left:342px;top:523px;width:2px;height:1px;background:#9a9a9a;"></div>
<div style="position:absolute;left:342px;top:525px;width:2px;height:1px;background:#9a9a9a;"></div>
<div style="position:absolute;left:342px;top:527px;width:2px;height:1px;background:#9a9a9a;"></div>
<div style="position:absolute;left:342px;top:529px;width:2px;height:1px;background:#9a9a9a;"></div>
<div style="position:absolute;left:342px;top:531px;width:2px;height:1px;background:#9a9a9a;"></div>
<div style="position:absolute;left:342px;top:533px;width:2px;height:1px;background:#9a9a9a;"></div>
<div style="position:absolute;left:342px;top:535px;width:2px;height:1px;background:#9a9a9a;"></div>
<div style="position:absolute;left:342px;top:537px;width:2px;height:1px;background:#9a9a9a;"></div>
<div style="position:absolute;left:346px;top:201px;width:1125px;height:801px;background:#393939;"></div>
<div style="position:absolute;left:1470px;top:201px;width:1px;height:801px;background:#a0a0a0;"></div>
<div style="position:absolute;left:346px;top:1001px;width:1125px;height:1px;background:#a0a0a0;"></div>
<div style="position:absolute;left:366px;top:251px;width:1054px;height:700px;background:#c1ced6;"></div>
<div style="position:absolute;left:346px;top:303px;width:20px;height:648px;background:#c1ced6;"></div>
<div style="position:absolute;left:387.67px;top:273.03px;font-size:16.5px;line-height:16.5px;font-weight:400;color:#444;white-space:nowrap;transform:scaleX(1.0009);transform-origin:0 0;">Settings</div>
<div style="position:absolute;left:1375px;top:273px;width:18px;height:18px;border:1px solid #8a949a;box-sizing:border-box;background:#f0f0f0;"></div>
<svg style="position:absolute;left:1377px;top:275px;" width="14" height="14" viewBox="0 0 14 14"><circle cx="7" cy="7" r="6" fill="none" stroke="#777" stroke-width="1"/><circle cx="7" cy="7" r="4.2" fill="#e0002a" stroke="#555" stroke-width="0.6"/><path d="M5 5 L9 9 M9 5 L5 9" stroke="#fff" stroke-width="1.6"/></svg>
<div style="position:absolute;left:378px;top:320px;width:1030px;height:587px;border:1px solid #aaa;box-sizing:border-box;background:#fff;"></div>
<div style="position:absolute;left:381px;top:298px;width:51px;height:22px;border:1px solid #aaa;box-sizing:border-box;background:linear-gradient(#f0f0f0,#e5e5e5);"></div>
<div style="position:absolute;left:389.84px;top:303.74px;font-size:12px;line-height:12px;font-weight:400;color:#444;white-space:nowrap;transform:scaleX(0.8950);transform-origin:0 0;">Basics</div>
<div style="position:absolute;left:431px;top:298px;width:89px;height:22px;border:1px solid #aaa;box-sizing:border-box;background:linear-gradient(#f0f0f0,#e5e5e5);"></div>
<div style="position:absolute;left:439.39px;top:303.74px;font-size:12px;line-height:12px;font-weight:400;color:#444;white-space:nowrap;transform:scaleX(1.0140);transform-origin:0 0;">Color Coding</div>
<div style="position:absolute;left:623px;top:298px;width:110px;height:22px;border:1px solid #aaa;box-sizing:border-box;background:linear-gradient(#f0f0f0,#e5e5e5);"></div>
<div style="position:absolute;left:631.76px;top:303.74px;font-size:12px;line-height:12px;font-weight:400;color:#444;white-space:nowrap;transform:scaleX(0.9811);transform-origin:0 0;">Part Assignments</div>
<div style="position:absolute;left:732px;top:298px;width:92px;height:22px;border:1px solid #aaa;box-sizing:border-box;background:linear-gradient(#f0f0f0,#e5e5e5);"></div>
<div style="position:absolute;left:740.82px;top:303.74px;font-size:12px;line-height:12px;font-weight:400;color:#444;white-space:nowrap;transform:scaleX(1.0017);transform-origin:0 0;">Option Codes</div>
<div style="position:absolute;left:519px;top:296px;width:105px;height:25px;border:1px solid #aaa;border-bottom:none;box-sizing:border-box;background:#fff;"></div>
<div style="position:absolute;left:528.30px;top:303.74px;font-size:12px;line-height:12px;font-weight:400;color:#444;white-space:nowrap;transform:scaleX(1.0291);transform-origin:0 0;">Activity Splitting</div>
<div style="position:absolute;left:395.73px;top:336.90px;font-size:15px;line-height:15px;font-weight:400;color:#444;white-space:nowrap;transform:scaleX(1.0246);transform-origin:0 0;">Group by</div>
<div style="position:absolute;left:396px;top:358px;width:894px;height:1px;background:#b0b0b0;"></div>
<div style="position:absolute;left:395.92px;top:368.54px;font-size:12px;line-height:12px;font-weight:400;color:#444;white-space:nowrap;transform:scaleX(0.9735);transform-origin:0 0;">Side:</div>
<div style="position:absolute;left:546px;top:363px;width:844px;height:22px;border:1px solid #acacac;box-sizing:border-box;background:#fff;"></div>
<div style="position:absolute;left:1373px;top:365px;width:15px;height:18px;border:1px solid #acacac;box-sizing:border-box;background:linear-gradient(#f2f2f2,#e3e3e3);"></div>
<svg style="position:absolute;left:1376px;top:371.0px;" width="9" height="6" viewBox="0 0 9 6"><path d="M1 1 L4.5 4.5 L8 1" stroke="#555" stroke-width="1.5" fill="none"/></svg>
<div style="position:absolute;left:548.19px;top:368.84px;font-size:12px;line-height:12px;font-weight:400;color:#444;white-space:nowrap;transform:scaleX(1.0516);transform-origin:0 0;">Mixed</div>
<div style="position:absolute;left:396.27px;top:394.84px;font-size:12px;line-height:12px;font-weight:400;color:#444;white-space:nowrap;transform:scaleX(0.9580);transform-origin:0 0;">Type:</div>
<div style="position:absolute;left:546px;top:389px;width:844px;height:22px;border:1px solid #acacac;box-sizing:border-box;background:#fff;"></div>
<div style="position:absolute;left:1373px;top:391px;width:15px;height:18px;border:1px solid #acacac;box-sizing:border-box;background:linear-gradient(#f2f2f2,#e3e3e3);"></div>
<svg style="position:absolute;left:1376px;top:397.0px;" width="9" height="6" viewBox="0 0 9 6"><path d="M1 1 L4.5 4.5 L8 1" stroke="#555" stroke-width="1.5" fill="none"/></svg>
<div style="position:absolute;left:548.24px;top:394.84px;font-size:12px;line-height:12px;font-weight:400;color:#444;white-space:nowrap;transform:scaleX(1.0006);transform-origin:0 0;">Part Number</div>
<svg style="position:absolute;left:396px;top:424px;" width="14" height="14" viewBox="0 0 14 14"><circle cx="7" cy="7" r="6.3" fill="#fff" stroke="#555" stroke-width="1"/></svg>
<div style="position:absolute;left:414.50px;top:426.04px;font-size:12px;line-height:12px;font-weight:400;color:#444;white-space:nowrap;transform:scaleX(1.0062);transform-origin:0 0;">All Items on one Activity</div>
<svg style="position:absolute;left:396px;top:450px;" width="14" height="14" viewBox="0 0 14 14"><circle cx="7" cy="7" r="6.3" fill="#fff" stroke="#555" stroke-width="1"/><circle cx="7" cy="7" r="4" fill="#222"/></svg>
<div style="position:absolute;left:413.53px;top:451.84px;font-size:12px;line-height:12px;font-weight:400;color:#444;white-space:nowrap;transform:scaleX(1.0131);transform-origin:0 0;">Max Items per Activity:</div>
<div style="position:absolute;left:546px;top:446px;width:844px;height:22px;border:1px solid #acacac;box-sizing:border-box;background:#fff;"></div>
<div style="position:absolute;left:1373px;top:448px;width:15px;height:18px;border:1px solid #acacac;box-sizing:border-box;background:linear-gradient(#f2f2f2,#e3e3e3);"></div>
<svg style="position:absolute;left:1376px;top:449px;" width="9" height="16" viewBox="0 0 9 16"><path d="M1 5 L4.5 1.5 L8 5 M1 11 L4.5 14.5 L8 11" stroke="#555" stroke-width="1.4" fill="none"/></svg>
<div style="position:absolute;left:1360.13px;top:450.50px;font-size:13px;line-height:13px;font-weight:400;color:#444;white-space:nowrap;transform:scaleX(1.0256);transform-origin:0 0;">4</div>
<div style="position:absolute;left:395.72px;top:486.50px;font-size:15px;line-height:15px;font-weight:400;color:#444;white-space:nowrap;transform:scaleX(1.0404);transform-origin:0 0;">Sorting</div>
<div style="position:absolute;left:396px;top:507px;width:894px;height:1px;background:#b0b0b0;"></div>
<div style="position:absolute;left:395.92px;top:517.84px;font-size:12px;line-height:12px;font-weight:400;color:#444;white-space:nowrap;transform:scaleX(0.9735);transform-origin:0 0;">Side:</div>
<div style="position:absolute;left:546px;top:512px;width:844px;height:22px;border:1px solid #acacac;box-sizing:border-box;background:#fff;"></div>
<div style="position:absolute;left:1373px;top:514px;width:15px;height:18px;border:1px solid #acacac;box-sizing:border-box;background:linear-gradient(#f2f2f2,#e3e3e3);"></div>
<svg style="position:absolute;left:1376px;top:520.0px;" width="9" height="6" viewBox="0 0 9 6"><path d="M1 1 L4.5 4.5 L8 1" stroke="#555" stroke-width="1.5" fill="none"/></svg>
<div style="position:absolute;left:551.09px;top:517.84px;font-size:12px;line-height:12px;font-weight:400;color:#444;white-space:nowrap;transform:scaleX(1.0516);transform-origin:0 0;">Mixed</div>
<div style="position:absolute;left:395.90px;top:545.54px;font-size:12px;line-height:12px;font-weight:400;color:#444;white-space:nowrap;transform:scaleX(1.0025);transform-origin:0 0;">Sort:</div>
<div style="position:absolute;left:546px;top:543px;width:698px;height:18px;border:1px solid #acacac;box-sizing:border-box;background:#fff;"></div>
<div style="position:absolute;left:1227px;top:545px;width:15px;height:14px;border:1px solid #acacac;box-sizing:border-box;background:linear-gradient(#f2f2f2,#e3e3e3);"></div>
<svg style="position:absolute;left:1230px;top:549.0px;" width="9" height="6" viewBox="0 0 9 6"><path d="M1 1 L4.5 4.5 L8 1" stroke="#555" stroke-width="1.5" fill="none"/></svg>
<div style="position:absolute;left:552.10px;top:546.84px;font-size:12px;line-height:12px;font-weight:400;color:#444;white-space:nowrap;transform:scaleX(1.0005);transform-origin:0 0;">Alphanumeric - Part Number</div>
<svg style="position:absolute;left:1258px;top:547px;" width="14" height="14" viewBox="0 0 14 14"><circle cx="7" cy="7" r="6.3" fill="#fff" stroke="#555" stroke-width="1"/><circle cx="7" cy="7" r="4" fill="#222"/></svg>
<div style="position:absolute;left:1277.00px;top:549.04px;font-size:12px;line-height:12px;font-weight:400;color:#444;white-space:nowrap;transform:scaleX(0.8541);transform-origin:0 0;">ASC</div>
<svg style="position:absolute;left:1302px;top:547px;" width="14" height="14" viewBox="0 0 14 14"><circle cx="7" cy="7" r="6.3" fill="#fff" stroke="#555" stroke-width="1"/></svg>
<div style="position:absolute;left:1320.14px;top:549.04px;font-size:12px;line-height:12px;font-weight:400;color:#444;white-space:nowrap;transform:scaleX(0.8961);transform-origin:0 0;">DSC</div>
<div style="position:absolute;left:1346px;top:543px;width:34px;height:37px;background:#c1ced6;"></div>
<div style="position:absolute;left:890px;top:579px;width:500px;height:70px;background:#c1ced6;"></div>
<div style="position:absolute;left:1352px;top:544px;width:22px;height:18px;border:1px solid #a9b4bc;box-sizing:border-box;"></div>
<svg style="position:absolute;left:1358px;top:551px;" width="10" height="3" viewBox="0 0 10 3"><rect x="0" y="0" width="2.2" height="2.2" fill="#333"/><rect x="3.9" y="0" width="2.2" height="2.2" fill="#333"/><rect x="7.8" y="0" width="2.2" height="2.2" fill="#333"/></svg>
<div style="position:absolute;left:901.16px;top:593.84px;font-size:12px;line-height:12px;font-weight:400;color:#444;white-space:nowrap;transform:scaleX(0.9854);transform-origin:0 0;">Then by:</div>
<div style="position:absolute;left:957px;top:590px;width:324px;height:18px;border:1px solid #acacac;box-sizing:border-box;background:#fff;"></div>
<div style="position:absolute;left:1264px;top:592px;width:15px;height:14px;border:1px solid #acacac;box-sizing:border-box;background:linear-gradient(#f2f2f2,#e3e3e3);"></div>
<svg style="position:absolute;left:1267px;top:596.0px;" width="9" height="6" viewBox="0 0 9 6"><path d="M1 1 L4.5 4.5 L8 1" stroke="#555" stroke-width="1.5" fill="none"/></svg>
<div style="position:absolute;left:962.60px;top:593.84px;font-size:12px;line-height:12px;font-weight:400;color:#444;white-space:nowrap;transform:scaleX(1.0005);transform-origin:0 0;">Alphanumeric - Part Number</div>
<svg style="position:absolute;left:1295px;top:594px;" width="14" height="14" viewBox="0 0 14 14"><circle cx="7" cy="7" r="6.3" fill="#fff" stroke="#555" stroke-width="1"/><circle cx="7" cy="7" r="4" fill="#222"/></svg>
<div style="position:absolute;left:1313.30px;top:595.84px;font-size:12px;line-height:12px;font-weight:400;color:#444;white-space:nowrap;transform:scaleX(0.8541);transform-origin:0 0;">ASC</div>
<svg style="position:absolute;left:1339px;top:594px;" width="14" height="14" viewBox="0 0 14 14"><circle cx="7" cy="7" r="6.3" fill="#fff" stroke="#555" stroke-width="1"/></svg>
<div style="position:absolute;left:1357.04px;top:595.84px;font-size:12px;line-height:12px;font-weight:400;color:#444;white-space:nowrap;transform:scaleX(0.8961);transform-origin:0 0;">DSC</div>
<div style="position:absolute;left:900.44px;top:619.84px;font-size:12px;line-height:12px;font-weight:400;color:#444;white-space:nowrap;transform:scaleX(0.9969);transform-origin:0 0;">Finally by:</div>
<div style="position:absolute;left:957px;top:616px;width:324px;height:18px;border:1px solid #7eb4ea;box-sizing:border-box;background:#fff;"></div>
<div style="position:absolute;left:1264px;top:618px;width:15px;height:14px;border:1px solid #3c7fb1;box-sizing:border-box;background:linear-gradient(#ebf4fd,#c4dff6);"></div>
<svg style="position:absolute;left:1267px;top:622.0px;" width="9" height="6" viewBox="0 0 9 6"><path d="M1 1 L4.5 4.5 L8 1" stroke="#555" stroke-width="1.5" fill="none"/></svg>
<div style="position:absolute;left:961.64px;top:619.84px;font-size:12px;line-height:12px;font-weight:400;color:#444;white-space:nowrap;transform:scaleX(0.9980);transform-origin:0 0;">BOM Line Item</div>
<svg style="position:absolute;left:1295px;top:620px;" width="14" height="14" viewBox="0 0 14 14"><circle cx="7" cy="7" r="6.3" fill="#fff" stroke="#555" stroke-width="1"/><circle cx="7" cy="7" r="4" fill="#222"/></svg>
<div style="position:absolute;left:1313.30px;top:621.84px;font-size:12px;line-height:12px;font-weight:400;color:#444;white-space:nowrap;transform:scaleX(0.8541);transform-origin:0 0;">ASC</div>
<svg style="position:absolute;left:1339px;top:620px;" width="14" height="14" viewBox="0 0 14 14"><circle cx="7" cy="7" r="6.3" fill="#fff" stroke="#555" stroke-width="1"/></svg>
<div style="position:absolute;left:1357.04px;top:621.84px;font-size:12px;line-height:12px;font-weight:400;color:#444;white-space:nowrap;transform:scaleX(0.8961);transform-origin:0 0;">DSC</div>
<div style="position:absolute;left:957px;top:634px;width:324px;height:278px;border:1px solid #a0a0a0;box-sizing:border-box;background:#fff;box-shadow:2px 2px 3px rgba(0,0,0,0.25);"></div>
<div style="position:absolute;left:959px;top:696px;width:320px;height:20px;background:#bfdaee;"></div>
<div style="position:absolute;left:966.37px;top:641.14px;font-size:12px;line-height:12px;font-weight:400;color:#444;white-space:nowrap;transform:scaleX(1.0501);transform-origin:0 0;">&lt;None&gt;</div>
<div style="position:absolute;left:967.00px;top:661.14px;font-size:12px;line-height:12px;font-weight:400;color:#444;white-space:nowrap;transform:scaleX(1.0108);transform-origin:0 0;">Alphanumeric - Footprint Name</div>
<div style="position:absolute;left:967.00px;top:681.14px;font-size:12px;line-height:12px;font-weight:400;color:#444;white-space:nowrap;transform:scaleX(1.0005);transform-origin:0 0;">Alphanumeric - Part Number</div>
<div style="position:absolute;left:966.04px;top:701.14px;font-size:12px;line-height:12px;font-weight:400;color:#444;white-space:nowrap;transform:scaleX(0.9980);transform-origin:0 0;">BOM Line Item</div>
<div style="position:absolute;left:966.41px;top:721.14px;font-size:12px;line-height:12px;font-weight:400;color:#444;white-space:nowrap;transform:scaleX(0.9915);transform-origin:0 0;">Customer Part Number</div>
<div style="position:absolute;left:966.03px;top:741.14px;font-size:12px;line-height:12px;font-weight:400;color:#444;white-space:nowrap;transform:scaleX(1.0072);transform-origin:0 0;">Footprint Size</div>
<div style="position:absolute;left:966.03px;top:761.14px;font-size:12px;line-height:12px;font-weight:400;color:#444;white-space:nowrap;transform:scaleX(1.0080);transform-origin:0 0;">Manufacturer Part Number</div>
<div style="position:absolute;left:966.04px;top:781.14px;font-size:12px;line-height:12px;font-weight:400;color:#444;white-space:nowrap;transform:scaleX(1.0000);transform-origin:0 0;">Polarity</div>
<div style="position:absolute;left:966.50px;top:801.14px;font-size:12px;line-height:12px;font-weight:400;color:#444;white-space:nowrap;transform:scaleX(1.0326);transform-origin:0 0;">Quantity</div>
<div style="position:absolute;left:966.09px;top:821.14px;font-size:12px;line-height:12px;font-weight:400;color:#444;white-space:nowrap;transform:scaleX(0.9467);transform-origin:0 0;">References</div>
<div style="position:absolute;left:966.42px;top:840.84px;font-size:12px;line-height:12px;font-weight:400;color:#444;white-space:nowrap;transform:scaleX(0.9722);transform-origin:0 0;">Socket</div>
<div style="position:absolute;left:966.79px;top:860.44px;font-size:12px;line-height:12px;font-weight:400;color:#444;white-space:nowrap;transform:scaleX(0.8862);transform-origin:0 0;">X</div>
<div style="position:absolute;left:966.79px;top:879.44px;font-size:12px;line-height:12px;font-weight:400;color:#444;white-space:nowrap;transform:scaleX(0.8915);transform-origin:0 0;">XY</div>
<div style="position:absolute;left:966.77px;top:899.14px;font-size:12px;line-height:12px;font-weight:400;color:#444;white-space:nowrap;transform:scaleX(0.9409);transform-origin:0 0;">Y</div>
<div style="position:absolute;left:1330px;top:919px;width:75px;height:22px;border:1px solid #acacac;box-sizing:border-box;background:linear-gradient(#f2f2f2,#e4e4e4);"></div>
<div style="position:absolute;left:1359.35px;top:925.24px;font-size:12px;line-height:12px;font-weight:400;color:#444;white-space:nowrap;transform:scaleX(0.9353);transform-origin:0 0;">OK</div>
<div style="position:absolute;left:879px;top:519px;width:521px;height:398px;border:5px solid #e61b24;box-sizing:border-box;"></div>
</body></html>
